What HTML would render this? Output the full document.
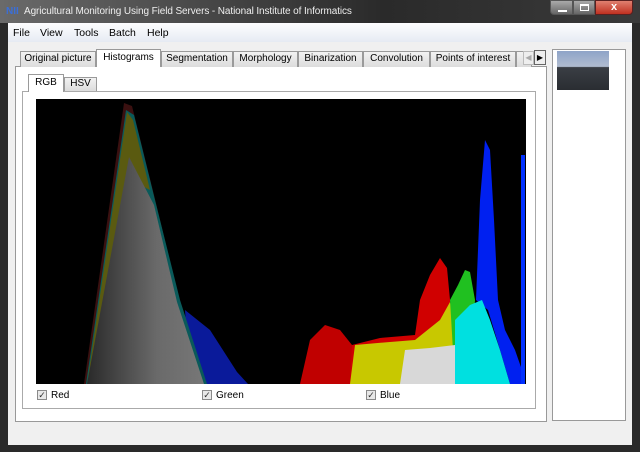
<!DOCTYPE html>
<html><head><meta charset="utf-8"><style>
*{margin:0;padding:0;box-sizing:border-box}
body{width:640px;height:452px;overflow:hidden;background:#2a2a2a;font-family:"Liberation Sans",sans-serif;font-size:10px;color:#000;position:relative}
.abs{position:absolute}
#title{left:0;top:0;width:640px;height:23px;background:linear-gradient(90deg,#6a6a6a 0%,#4a4a4a 30%,#2a2a2a 60%,#3a3a3a 100%)}
#client{left:8px;top:23px;width:624px;height:422px;background:#f0f0f0}
#menu{left:8px;top:23px;width:624px;height:19px;background:linear-gradient(#fdfdfe,#e6ebf3)}
.tab{position:absolute;top:51px;height:16px;border:1px solid #9a9a9a;border-bottom:none;background:linear-gradient(#f2f2f2,#dcdcdc);font-size:10px;text-align:center;line-height:14px}
.cb{position:absolute;top:390px;width:10px;height:10px;border:1px solid #8a8a8a;background:#e8e8e8;font-size:9px;line-height:8px;text-align:center;color:#333}
.lbl{position:absolute;top:390px;font-size:10px}
</style></head><body>
<div id="title" class="abs"></div>
<div class="abs" style="left:6px;top:6px;font-weight:bold;color:#3b6fd8;font-size:10px">NII</div>
<div class="abs" style="left:24px;top:6px;color:#eee;font-size:10px;letter-spacing:-0.1px">Agricultural Monitoring Using Field Servers - National Institute of Informatics</div>
<div class="abs" style="left:550px;top:0;width:23px;height:15px;border:1px solid #555;border-radius:0 0 0 4px;background:linear-gradient(#aaa,#666)"><div class="abs" style="left:7px;top:9px;width:9px;height:2px;background:#fff"></div></div>
<div class="abs" style="left:573px;top:0;width:22px;height:15px;border:1px solid #555;background:linear-gradient(#aaa,#666)"><div class="abs" style="left:6px;top:3px;width:9px;height:7px;border:2px solid #fff;border-width:2px 1px 1px 1px"></div></div>
<div class="abs" style="left:595px;top:0;width:38px;height:15px;border:1px solid #5a2020;border-radius:0 0 4px 0;background:linear-gradient(#e08070,#c03020);color:#fff;font-weight:bold;text-align:center;font-size:11px;line-height:13px">x</div>
<div id="client" class="abs"></div>
<div id="menu" class="abs"></div>
<div class="abs" style="left:13px;top:27px;font-size:10.5px">File</div>
<div class="abs" style="left:40px;top:27px;font-size:10.5px">View</div>
<div class="abs" style="left:74px;top:27px;font-size:10.5px">Tools</div>
<div class="abs" style="left:109px;top:27px;font-size:10.5px">Batch</div>
<div class="abs" style="left:147px;top:27px;font-size:10.5px">Help</div>

<div class="abs" style="left:15px;top:66px;width:532px;height:356px;border:1px solid #999;background:#fff"></div>
<div class="tab" style="left:20px;width:76px">Original picture</div>
<div class="tab" style="left:96px;top:49px;height:18px;width:65px;background:#fff;border-color:#999;line-height:16px">Histograms</div>
<div class="tab" style="left:161px;width:72px">Segmentation</div>
<div class="tab" style="left:233px;width:65px">Morphology</div>
<div class="tab" style="left:298px;width:65px">Binarization</div>
<div class="tab" style="left:363px;width:67px">Convolution</div>
<div class="tab" style="left:430px;width:86px">Points of interest</div>
<div class="tab" style="left:516px;width:16px"></div>
<div class="abs" style="left:523px;top:51px;width:11px;height:14px;border:1px solid #bbb;background:#eee;color:#aaa;font-size:8px;line-height:12px;text-align:center">◀</div>
<div class="abs" style="left:534px;top:50px;width:12px;height:15px;border:1px solid #666;background:#eee;font-size:8px;line-height:13px;text-align:center">▶</div>

<div class="abs" style="left:22px;top:91px;width:514px;height:318px;border:1px solid #aaa;background:#fff"></div>
<div class="tab" style="left:28px;top:74px;height:18px;width:36px;background:#fff;line-height:16px">RGB</div>
<div class="tab" style="left:64px;top:77px;height:14px;width:33px;line-height:12px">HSV</div>

<svg class="abs" style="left:36px;top:99px" width="490" height="285" viewBox="36 99 490 285">
<defs><linearGradient id="g" x1="0" x2="1"><stop offset="0" stop-color="#2a2a2a"/><stop offset="0.6" stop-color="#6a6a6a"/><stop offset="1" stop-color="#777"/></linearGradient></defs>
<rect x="36" y="99" width="490" height="285" fill="#000"/>
<polygon points="185,310 210,330 237,372 248,384 190,384" fill="#0a1a9a"/>
<polygon points="84,384 124,103 132,106 154,195 178,295 205,384" fill="#3a1010"/>
<polygon points="86,384 126,110 134,115 155,200 180,300 207,384" fill="#0a5a5a"/>
<polygon points="87,384 127,112 133,120 150,190 130,180" fill="#5a5a10"/>
<polygon points="87,384 129,157 154,205 177,302 204,384" fill="url(#g)"/>
<polygon points="300,384 310,340 325,325 340,330 352,345 352,384" fill="#c00000"/>
<polygon points="350,384 352,345 380,338 415,335 420,300 430,275 440,258 447,268 450,300 452,384" fill="#d00000"/>
<polygon points="350,384 355,345 390,342 415,340 440,320 450,302 455,320 458,384" fill="#c8c800"/>
<polygon points="450,300 458,285 465,270 470,272 475,300 470,384 455,384" fill="#20c020"/>
<polygon points="400,384 405,350 430,348 455,345 465,360 470,384" fill="#d8d8d8"/>
<polygon points="476,300 480,200 485,140 490,150 494,220 498,300 505,330 515,350 522,370 524,384 510,384 500,350 488,310" fill="#0020f0"/>
<polygon points="455,384 455,320 470,305 482,300 490,320 500,350 510,384" fill="#00e0e0"/>
<rect x="521" y="155" width="4" height="229" fill="#0030ff"/>
</svg>
<div class="cb" style="left:37px">✓</div><div class="lbl" style="left:51px">Red</div>
<div class="cb" style="left:202px">✓</div><div class="lbl" style="left:216px">Green</div>
<div class="cb" style="left:366px">✓</div><div class="lbl" style="left:380px">Blue</div>

<div class="abs" style="left:552px;top:49px;width:74px;height:372px;border:1px solid #999;background:#fff"></div>
<div class="abs" style="left:557px;top:51px;width:52px;height:39px;background:linear-gradient(#8fa4c8 0%,#b0bcd0 40%,#3a3e44 42%,#2a2d32 100%)"></div>
</body></html>
